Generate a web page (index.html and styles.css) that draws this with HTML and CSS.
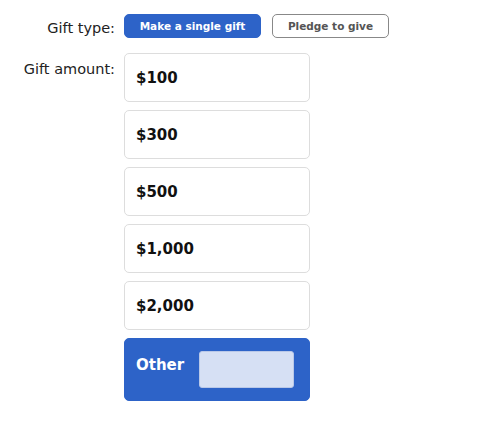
FILE: index.html
```html
<!DOCTYPE html>
<html>
<head>
<meta charset="utf-8">
<link rel="stylesheet" href="styles.css">
</head>
<body>
<div class="form">
  <div class="label type-label">Gift type:</div>
  <div class="types">
    <button class="type active">Make a single gift</button>
    <button class="type">Pledge to give</button>
  </div>
  <div class="label amount-label">Gift amount:</div>
  <div class="amounts">
    <div class="amount">$100</div>
    <div class="amount">$300</div>
    <div class="amount">$500</div>
    <div class="amount">$1,000</div>
    <div class="amount">$2,000</div>
    <div class="amount other"><span class="other-text">Other</span><div class="other-input"></div></div>
  </div>
</div>
</body>
</html>
```
FILE: styles.css
```css
body {
  margin: 0;
  background: #fff;
  font-family: "DejaVu Sans", sans-serif;
}
.form {
  display: grid;
  grid-template-columns: 115px 186px;
  column-gap: 9px;
  row-gap: 14px;
  padding-top: 14px;
}
.label {
  text-align: right;
  font-size: 14.5px;
  color: #222;
}
.type-label {
  line-height: 22px;
  padding-top: 3px;
}
.amount-label {
  padding-top: 8px;
}
.types {
  display: flex;
  align-items: flex-start;
  gap: 11px;
  width: 280px;
}
.type {
  font-family: "DejaVu Sans", sans-serif;
  font-weight: bold;
  font-size: 10.5px;
  height: 24px;
  border-radius: 5px;
  border: 1px solid #888;
  background: #fff;
  color: #555;
  padding: 0 6px;
  width: 117px;
}
.type.active {
  width: 137px;
  background: #2d63c8;
  border-color: #2d63c8;
  color: #fff;
}
.amounts {
  display: flex;
  flex-direction: column;
  gap: 8px;
}
.amount {
  height: 47px;
  box-sizing: content-box;
  border: 1px solid #ddd;
  border-radius: 5px;
  display: flex;
  align-items: center;
  padding-left: 11px;
  padding-top: 1px;
  height: 46px;
  font-family: "DejaVu Sans", sans-serif;
  font-weight: bold;
  font-size: 15px;
  color: #111;
}
.amount.other {
  height: 63px;
  padding-top: 0;
  box-sizing: border-box;
  background: #2d63c8;
  border-color: #2d63c8;
  color: #fff;
  gap: 15px;
}
.other-text {
  padding-bottom: 10px;
}
.other-input {
  width: 93px;
  height: 35px;
  background: #d6e0f4;
  border: 1px solid #b9c8e8;
  border-radius: 3px;
}
```
